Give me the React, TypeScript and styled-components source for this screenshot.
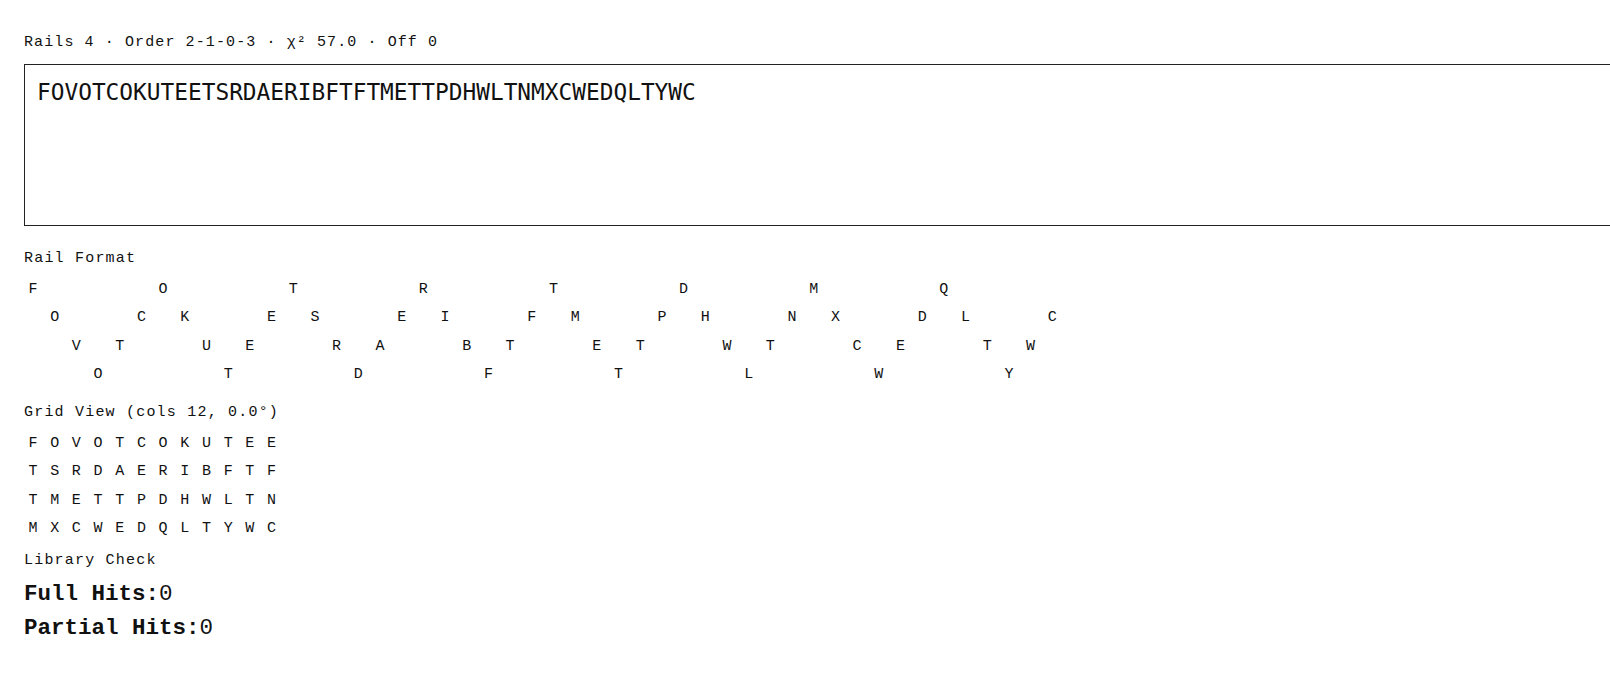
import React from "react";
import styled, { createGlobalStyle } from "styled-components";

const CIPHER = "FOVOTCOKUTEETSRDAERIBFTFTMETTPDHWLTNMXCWEDQLTYWC";
const RAILS = 4;
const COLS = 12;

// zigzag rail index for a position in the text
function railOf(i: number) {
  const period = 2 * (RAILS - 1);
  const m = i % period;
  return m < RAILS ? m : period - m;
}

const GlobalStyle = createGlobalStyle`
  html, body {
    margin: 0;
    background: #fff;
    overflow-x: hidden;
  }
  body {
    font-family: "Liberation Mono", "DejaVu Sans Mono", monospace;
    color: #111;
  }
`;

const Page = styled.div`
  padding: 33px 0 0 24px;
`;

const Meta = styled.div`
  font-size: 15px;
  letter-spacing: 1.1px;
  line-height: 20px;
`;

const CipherBox = styled.textarea`
  display: block;
  margin: 11px 0 0;
  box-sizing: content-box;
  width: 100%;
  height: 134px;
  padding: 14px 12px 12px;
  border: 1px solid #222;
  font-family: "DejaVu Sans Mono", monospace;
  font-size: 22.8px;
  color: #111;
  background: #fff;
  resize: none;
  outline: none;
`;

const SectionLabel = styled.div<{ $gap: number }>`
  margin-top: ${(p) => p.$gap}px;
  font-size: 15px;
  letter-spacing: 1.2px;
  line-height: 20px;
`;

const Letters = styled.div<{ $gap: number }>`
  margin-top: ${(p) => p.$gap}px;
`;

const LetterRow = styled.div`
  display: flex;
  gap: 3.7px;
  height: 28.4px;
  align-items: center;
`;

const Cell = styled.span`
  width: 18px;
  flex: none;
  text-align: center;
  font-size: 15px;
  line-height: 20px;
`;

const Hits = styled.div`
  margin-top: 6px;
`;

const HitLine = styled.div`
  font-size: 22.5px;
  line-height: 34px;

  strong {
    font-weight: bold;
  }
`;

function RailFormat() {
  const rows = Array.from({ length: RAILS }, (_, r) =>
    CIPHER.split("").map((ch, i) => (railOf(i) === r ? ch : ""))
  );
  return (
    <Letters $gap={6.6}>
      {rows.map((row, r) => (
        <LetterRow key={r}>
          {row.map((ch, i) => (
            <Cell key={i}>{ch}</Cell>
          ))}
        </LetterRow>
      ))}
    </Letters>
  );
}

function GridView() {
  const rows: string[] = [];
  for (let i = 0; i < CIPHER.length; i += COLS) rows.push(CIPHER.slice(i, i + COLS));
  return (
    <Letters $gap={6.7}>
      {rows.map((row, r) => (
        <LetterRow key={r}>
          {row.split("").map((ch, i) => (
            <Cell key={i}>{ch}</Cell>
          ))}
        </LetterRow>
      ))}
    </Letters>
  );
}

export default function App() {
  return (
    <>
      <GlobalStyle />
      <Page>
        <Meta>Rails 4 · Order 2-1-0-3 · χ² 57.0 · Off 0</Meta>
        <CipherBox readOnly value={CIPHER} spellCheck={false} />

        <SectionLabel $gap={23}>Rail Format</SectionLabel>
        <RailFormat />

        <SectionLabel $gap={13.8}>Grid View (cols 12, 0.0°)</SectionLabel>
        <GridView />

        <SectionLabel $gap={7.6}>Library Check</SectionLabel>
        <Hits>
          <HitLine>
            <strong>Full Hits:</strong>0
          </HitLine>
          <HitLine>
            <strong>Partial Hits:</strong>0
          </HitLine>
        </Hits>
      </Page>
    </>
  );
}
